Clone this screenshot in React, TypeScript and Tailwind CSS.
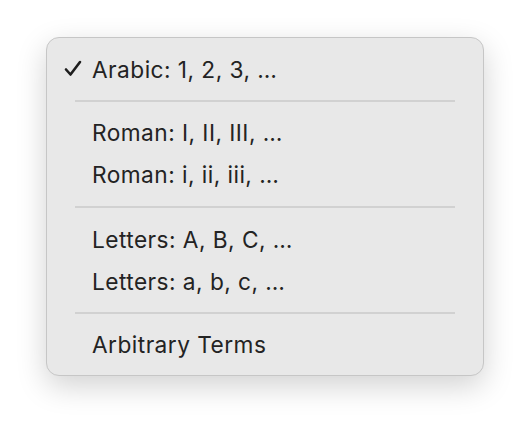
import React from "react";

function Check() {
  return (
    <svg width="18" height="17" viewBox="0 0 18 17" className="absolute left-[-28px] top-[1px]">
      <path d="M2 9.5 L6.5 14.5 L16 2" fill="none" stroke="#1e1e1e" strokeWidth="2.6" strokeLinecap="round" strokeLinejoin="round" />
    </svg>
  );
}

function Item({ label, checked }: { label: string; checked?: boolean }) {
  return (
    <div className="relative h-[42px] flex items-center pl-[45px] text-[22.7px] tracking-[0.02em] text-[#232323] leading-none">
      <span className="relative">
        {checked && <Check />}
        {label}
      </span>
    </div>
  );
}

function Sep({ wide }: { wide?: boolean }) {
  return (
    <div className={wide ? "pt-[10px] pb-[11px] px-[28px]" : "pt-[9px] pb-[10px] px-[28px]"}>
      <div className="h-[2px] bg-[#d1d1d1]" />
    </div>
  );
}

export default function App() {
  return (
    <div className="w-[530px] h-[430px] bg-white pt-[37px] pl-[46px]" style={{ fontFamily: "Inter, 'Noto Sans', sans-serif" }}>
      <div className="w-[438px] h-[339px] rounded-[13px] bg-[#e8e8e8] border border-[#c6c6c6] shadow-[0_10px_30px_rgba(0,0,0,0.18)] pt-[11px] pb-[10px] box-border">
        <Item label="Arabic: 1, 2, 3, …" checked />
        <Sep />
        <Item label="Roman: I, II, III, …" />
        <Item label="Roman: i, ii, iii, …" />
        <Sep wide />
        <Item label="Letters: A, B, C, …" />
        <Item label="Letters: a, b, c, …" />
        <Sep />
        <Item label="Arbitrary Terms" />
      </div>
    </div>
  );
}
